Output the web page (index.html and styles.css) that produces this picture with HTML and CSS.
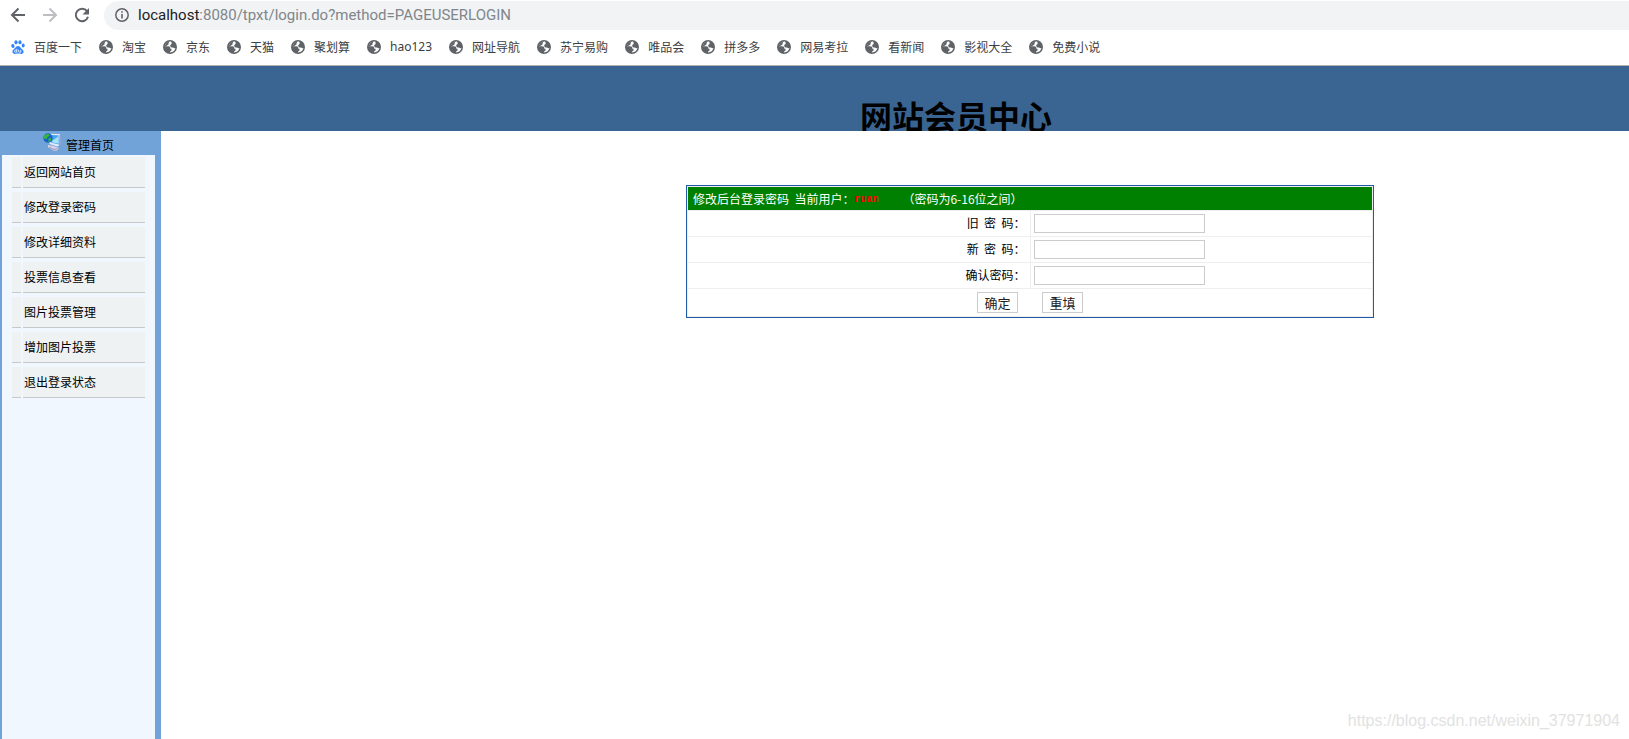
FILE: index.html
```html
<!DOCTYPE html>
<html lang="zh-CN">
<head>
<meta charset="utf-8">
<title>网站会员中心</title>
<link rel="stylesheet" href="styles.css">
</head>
<body>
<svg class="defs" aria-hidden="true">
  <symbol id="globe" viewBox="0 0 14 14">
    <circle cx="7" cy="7" r="7" fill="#5f6368"/>
    <path d="M8.300 1.700C6 1.300 3.300 2.500 2.200 4.800L1.800 6.200h3.500c1.400 0 2 .8 2 1.700v.9h1.200v1.500c0 .8-.8 1-1.400 1v1.200c2.700 0 4.900-1.900 5.300-4.400l-.9.200-1.600-.9H8.400L7.200 6.200V4.900l1.200-.6.300-.9z" fill="#fff"/>
    <path d="M2.200 4.800L1.800 6.200h1L5.500 4.500V3.200L6.600 1.600C4.600 1.700 3 3 2.200 4.800z" fill="#5f6368"/>
  </symbol>
</svg>
<header class="browser">
  <div class="toolbar">
    <button class="nav" aria-label="后退"><svg width="16" height="16" viewBox="0 0 16 16"><path d="M15 8H2M8.500 1.500 2 8l6.500 6.500" fill="none" stroke="#5f6368" stroke-width="2"/></svg></button>
    <button class="nav" aria-label="前进"><svg width="16" height="16" viewBox="0 0 16 16"><path d="M1 8h13M7.500 1.500 14 8l-6.500 6.500" fill="none" stroke="#bcbec1" stroke-width="2"/></svg></button>
    <button class="nav" aria-label="刷新"><svg width="16" height="16" viewBox="0 0 16 16"><path d="M13 4.200A6.200 6.200 0 1 0 14 9.800" fill="none" stroke="#5f6368" stroke-width="2"/><path d="M15 1v6.500H8.500z" fill="#5f6368"/></svg></button>
    <div class="address">
      <svg width="14" height="14" viewBox="0 0 14 14"><circle cx="7" cy="7" r="6.200" fill="none" stroke="#5f6368" stroke-width="1.500"/><path d="M7 6v4.500M7 3.300v1.500" stroke="#5f6368" stroke-width="1.600"/></svg>
      <span class="url"><b>localhost</b>:8080/tpxt/login.do?method=PAGEUSERLOGIN</span>
    </div>
  </div>
  <nav class="bookmarks">
    <a href="#"><svg viewBox="0 0 14 14"><g fill="#3385ff"><ellipse cx="1.900" cy="6" rx="1.600" ry="2" transform="rotate(-12 1.900 6)"/><ellipse cx="5" cy="2.300" rx="1.600" ry="2.100"/><ellipse cx="9" cy="2.300" rx="1.600" ry="2.100"/><ellipse cx="12.200" cy="5.600" rx="1.500" ry="2"/><path d="M7 6c1.700 0 2.200 1.300 3.300 2.400 1.200 1.100 2.300 1.800 2.300 3.300 0 1.300-1 2.200-2.200 2.200-1.300 0-2-.3-3.400-.3s-2.100.3-3.300.3c-1.400 0-2.300-1-2.300-2.300 0-1.600 1.400-2.200 2.400-3.300C4.900 7.200 5.400 6 7 6z"/></g><path d="M5.800 8.800v3.400H4.600a1 1 0 0 1 0-2.100h1.200M7.600 9.800v1.800q0 .6.600.6h1.600V9.800" fill="none" stroke="#fff" stroke-width=".8"/></svg>百度一下</a>
    <a href="#"><svg><use href="#globe"/></svg>淘宝</a>
    <a href="#"><svg><use href="#globe"/></svg>京东</a>
    <a href="#"><svg><use href="#globe"/></svg>天猫</a>
    <a href="#"><svg><use href="#globe"/></svg>聚划算</a>
    <a href="#"><svg><use href="#globe"/></svg><span class="latin">hao123</span></a>
    <a href="#"><svg><use href="#globe"/></svg>网址导航</a>
    <a href="#"><svg><use href="#globe"/></svg>苏宁易购</a>
    <a href="#"><svg><use href="#globe"/></svg>唯品会</a>
    <a href="#"><svg><use href="#globe"/></svg>拼多多</a>
    <a href="#"><svg><use href="#globe"/></svg>网易考拉</a>
    <a href="#"><svg><use href="#globe"/></svg>看新闻</a>
    <a href="#"><svg><use href="#globe"/></svg>影视大全</a>
    <a href="#"><svg><use href="#globe"/></svg>免费小说</a>
  </nav>
</header>
<div class="banner"><h1>网站会员中心</h1></div>
<div class="body">
  <aside class="sidebar">
    <div class="side-title">
      <svg width="18" height="18" viewBox="0 0 18 18">
        <path d="M5 12l5 1 6 2-2 2.500-3 .3-6-3.500z" fill="#dcd6ea"/><path d="M6 14l5 2.500 3.500-.8" fill="none" stroke="#9a92b8"/>
        <path d="M6 .8l11 .2.500 11-3.500 1.500L6.500 11z" fill="#dfe8fa"/><path d="M16.500 1.500l1 .8.200 10-1.700 1z" fill="#8a96c4"/>
        <path d="M7.300 2l8.200.3.300 9.200-8-2z" fill="#4aa6ea"/><path d="M9 8l6.200-4.500.3 7-6-1z" fill="#a4e3fb"/>
        <circle cx="5" cy="5" r="4.700" fill="#1763c8"/><path d="M1.200 2.500L5 .6l2 1.900L4.500 4l-.7 2L.7 5.500zM5.500 5.500l3-.8-.8 3-2.200 1.500z" fill="#35b63c"/>
      </svg>
      <span>管理首页</span>
    </div>
    <ul class="menu">
      <li><i></i><a href="#">返回网站首页</a></li>
      <li><i></i><a href="#">修改登录密码</a></li>
      <li><i></i><a href="#">修改详细资料</a></li>
      <li><i></i><a href="#">投票信息查看</a></li>
      <li><i></i><a href="#">图片投票管理</a></li>
      <li><i></i><a href="#">增加图片投票</a></li>
      <li><i></i><a href="#">退出登录状态</a></li>
    </ul>
  </aside>
  <main class="content">
    <form class="panel">
      <div class="panel-head"><span>修改后台登录密码&nbsp; 当前用户：</span><span class="user">ruan</span><span class="hint">（密码为6-16位之间）</span></div>
      <div class="row"><label for="old">旧&nbsp; 密&nbsp; 码：</label><div class="field"><input id="old" type="password"></div></div>
      <div class="row"><label for="new">新&nbsp; 密&nbsp; 码：</label><div class="field"><input id="new" type="password"></div></div>
      <div class="row"><label for="again">确认密码：</label><div class="field"><input id="again" type="password"></div></div>
      <div class="actions"><button type="submit">确定</button><button type="reset">重填</button></div>
    </form>
    <div class="watermark">https://blog.csdn.net/weixin_37971904</div>
  </main>
</div>
</body>
</html>
```
FILE: styles.css
```css
* { box-sizing: border-box; }
body {
  margin: 0;
  min-height: 100vh;
  display: flex;
  flex-direction: column;
  background: #fff;
  color: #000;
  font: 12px/16px "Noto Sans CJK SC", sans-serif;
}
a { color: inherit; text-decoration: none; }
button { font: inherit; padding: 0; background: #fff; }
.defs { display: none; }

.browser { border-bottom: 1px solid #b0b0b0; }
.toolbar {
  display: flex;
  align-items: center;
  padding-left: 10px;
  border-top: 1px solid #fff;
}
.nav { width: 16px; height: 16px; margin: 0 16px 2px 0; border: 0; }
.nav svg { display: block; }
.nav:nth-child(3) { margin-right: 14px; }
.address {
  flex: 1;
  display: flex;
  align-items: center;
  gap: 9px;
  height: 29px;
  padding: 0 0 2px 11px;
  border-radius: 15px 0 0 15px;
  background: #f1f3f4;
}
.url { font: 15px/20px Roboto, sans-serif; color: #80868b; }
.url b { font-weight: 400; color: #202124; }
.bookmarks {
  display: flex;
  align-items: center;
  gap: 17px;
  height: 35px;
  padding: 0 0 1px 11px;
  color: #3c4043;
  white-space: nowrap;
}
.bookmarks a { display: flex; align-items: center; gap: 9px; }
.bookmarks svg { width: 14px; height: 14px; }
.latin { font-family: "Noto Sans", sans-serif; }

.banner {
  height: 65px;
  padding: 25px 0 0 283px;
  overflow: hidden;
  background: #3a6592;
  text-align: center;
}
.banner h1 { margin: 0; font-size: 32px; line-height: 48px; }

.body { flex: 1; display: flex; }
.sidebar {
  width: 161px;
  border: solid #72a3d8;
  border-width: 0 6px 0 2px;
  background: #f0f7ff;
}
.side-title {
  display: flex;
  justify-content: center;
  gap: 5px;
  height: 24px;
  padding-top: 2px;
  background: #72a3d8;
}
.side-title span { padding-top: 4px; }
.menu {
  display: flex;
  flex-direction: column;
  gap: 4px;
  margin: 0;
  padding: 2px 10px;
  list-style: none;
}
.menu li { display: flex; gap: 2px; height: 31px; }
.menu i { width: 9px; background: #eef2f3; border-bottom: 1px solid #c6c8ca; }
.menu a {
  flex: 1;
  padding: 7px 1px;
  background: #eef2f3;
  border-bottom: 1px solid #c6c8ca;
}

.content {
  flex: 1;
  display: flex;
  flex-direction: column;
  align-items: center;
  justify-content: space-between;
  padding: 54px 0 9px 270px;
}
.panel {
  display: grid;
  gap: 1px;
  width: 688px;
  max-width: 100%;
  padding: 1px;
  border: 1px solid #1e5aa8;
  background: #eee;
}
.panel-head {
  display: flex;
  align-items: center;
  height: 23px;
  padding-left: 5px;
  background: #008000;
  color: #fff;
}
.user {
  padding-top: 3px;
  color: #f00;
  font: bold 10px/16px "Liberation Mono", monospace;
}
.hint { padding-left: 24px; }
.row { display: grid; grid-template-columns: 1fr 1fr; gap: 1px; }
.row label, .field { height: 25px; padding: 3px; background: #fff; }
.row label { padding: 4px; text-align: right; }
.field input {
  display: block;
  width: 171px;
  height: 19px;
  border: 1px solid #ccc;
  background: #fff;
}
.actions {
  display: flex;
  justify-content: center;
  gap: 24px;
  padding: 3px;
  background: #fff;
}
.actions button {
  width: 41px;
  height: 21px;
  border: 1px solid #ccc;
  color: #222;
  font-size: 13px;
  line-height: 18px;
}
.watermark {
  align-self: flex-end;
  padding-right: 9px;
  color: #e2e2e2;
  font: 16px/18px "Liberation Sans", Arial, sans-serif;
}
```
